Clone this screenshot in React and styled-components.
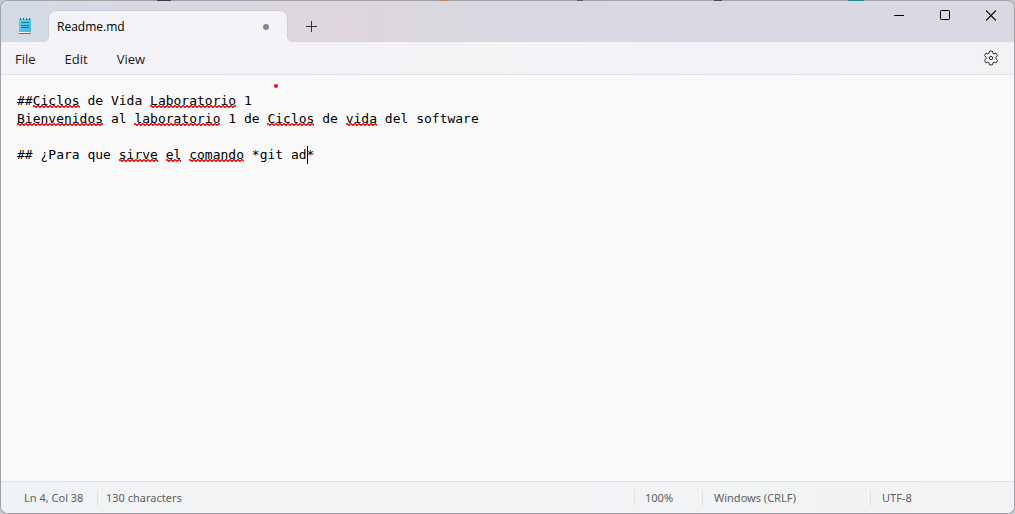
import React from "react";
import styled, { createGlobalStyle } from "styled-components";

const GlobalStyle = createGlobalStyle`
  *, *::before, *::after { box-sizing: border-box; }
  body {
    margin: 0;
    background: #c6c9cb;
    font-family: "Open Sans", "Noto Sans", sans-serif;
    color: #1b1b1b;
  }
  button, textarea { font: inherit; color: inherit; }
`;

const Window = styled.div`
  display: flex;
  flex-direction: column;
  min-height: 100vh;
  border: 1px solid transparent;
  border-radius: 8px;
  overflow: hidden;
  background:
    linear-gradient(#f9f9f9, #f9f9f9) padding-box,
    linear-gradient(
      90deg,
      transparent 157px, #3c383c 157px 171px,
      transparent 171px 439px, #b5836a 439px 447px,
      transparent 447px 577px, #5c5a60 577px 583px,
      transparent 583px 714px, #4c4a50 714px 722px,
      transparent 722px 848px, #2b8798 848px 864px,
      transparent 864px
    ) 0 0 / 100% 1px no-repeat border-box,
    linear-gradient(#a2a2a6, #a2a2a6) border-box;
`;

const TitleBar = styled.header`
  display: flex;
  height: 41px;
  padding-left: 15px;
  background: linear-gradient(90deg, #d3dbe6 0%, #d8d9e4 11%, #ddd6df 28%, #ded6dc 34%, #dbd8dd 41%, #d9d8e2 50%, #d8d9e2 60%, #d9d9e4 100%);
`;

const AppIcon = styled.svg`
  width: 18px;
  height: 18px;
  margin: 16px 14px 0 0;
`;

const Tab = styled.div`
  position: relative;
  display: flex;
  align-items: center;
  justify-content: space-between;
  width: 240px;
  height: 32px;
  margin-top: 9px;
  padding: 0 18px 0 8px;
  border: 1px solid #cfcfda;
  border-bottom: 0;
  border-radius: 8px 8px 0 0;
  background: #f3f3f7;
  font-size: 12px;
  line-height: 16px;

  &::before,
  &::after {
    content: "";
    position: absolute;
    bottom: 0;
    width: 4px;
    height: 4px;
  }
  &::before {
    right: 100%;
    background: radial-gradient(circle at 0 0, transparent 3px, #f3f3f7 4px);
  }
  &::after {
    left: 100%;
    background: radial-gradient(circle at 100% 0, transparent 3px, #f3f3f7 4px);
  }
`;

const TabTitle = styled.button`
  padding: 0;
  border: 0;
  background: none;
  color: #000;
`;

const UnsavedDot = styled.span`
  width: 6px;
  height: 6px;
  border-radius: 50%;
  background: #858585;
`;

const IconButton = styled.button`
  display: grid;
  place-items: center;
  width: ${(p) => p.$width}px;
  height: ${(p) => p.$height}px;
  padding: 0;
  border: 0;
  background: none;
`;

const NewTab = styled(IconButton)`
  margin-top: 9px;
`;

const WindowControls = styled.div`
  display: flex;
  margin-left: auto;
`;

const MenuBar = styled.nav`
  display: flex;
  align-items: center;
  justify-content: space-between;
  height: 33px;
  padding: 0 8px 0 4px;
  border-bottom: 1px solid #e3e3e6;
  background: linear-gradient(90deg, #f3f3f8 0%, #f4f2f6 32%, #f3f4f6 50%, #f2f3f8 68%, #f3f3f6 100%);
`;

const Menus = styled.div`
  display: flex;
  gap: 9px;
`;

const MenuButton = styled.button`
  padding: 2px 10px 0;
  border: 0;
  background: none;
  font-size: 13px;
  line-height: 30px;
`;

const Editor = styled.main`
  position: relative;
  display: flex;
  flex: 1;
  padding: 17px 16px;
  font-family: "DejaVu Sans Mono", "Liberation Mono", monospace;
  font-size: 13px;
  line-height: 18px;
`;

const TextArea = styled.textarea`
  flex: 1;
  padding: 0;
  border: 0;
  outline: 0;
  resize: none;
  background: none;
  color: #000;
`;

const Overlay = styled.div`
  position: absolute;
  inset: 17px 16px;
  pointer-events: none;
`;

const Squiggle = styled.svg`
  position: absolute;
  height: 3px;
`;

const Caret = styled.span`
  position: absolute;
  width: 1px;
  height: 18px;
  background: #000;
`;

const Pointer = styled.span`
  position: absolute;
  top: 9px;
  left: 273px;
  width: 4px;
  height: 4px;
  border-radius: 50%;
  background: #e81123;
`;

const StatusBar = styled.footer`
  display: flex;
  align-items: center;
  height: 32px;
  padding-left: 12px;
  border-top: 1px solid #e3e3e5;
  background: linear-gradient(90deg, #eff3f5 0%, #f2f3f6 12%, #f3f3f3 40%, #f1f3f6 60%, #f3f3f3 80%, #f4f2f5 100%);
  color: #5f5f5f;
  font-family: "Noto Sans", "Open Sans", sans-serif;
  font-size: 11px;
  line-height: 16px;
`;

const StatusCell = styled.span`
  flex: ${(p) => (p.$width ? `0 0 ${p.$width}px` : "1")};
  padding-left: ${(p) => p.$pad}px;
  border-left: 1px solid ${(p) => (p.$first ? "transparent" : "#e1e1e4")};
`;

const text = `##Ciclos de Vida Laboratorio 1
Bienvenidos al laboratorio 1 de Ciclos de vida del software

## ¿Para que sirve el comando *git ad*`;

const misspelled = [
  { line: 0, start: 2, length: 6 },
  { line: 0, start: 17, length: 11 },
  { line: 1, start: 0, length: 11 },
  { line: 1, start: 15, length: 11 },
  { line: 1, start: 32, length: 6 },
  { line: 1, start: 42, length: 4 },
  { line: 3, start: 13, length: 5 },
  { line: 3, start: 19, length: 2 },
  { line: 3, start: 22, length: 7 },
];

const LINE = 18;

export default function App() {
  return (
    <>
      <GlobalStyle />
      <Window>
        <TitleBar>
          <AppIcon viewBox="0 0 18 18" aria-hidden="true">
            <defs>
              <linearGradient id="page" x1="0" y1="0" x2="1" y2="1">
                <stop offset="0" stopColor="#62d4ee" />
                <stop offset="1" stopColor="#45b4da" />
              </linearGradient>
            </defs>
            <path d="M3 15h12v1H3z" fill="#f4f4f4" />
            <path d="M3 16h11l1-1v1l-1 1H3z" fill="#b4521c" />
            <rect x="3" y="2" width="12" height="13" rx="0.6" fill="url(#page)" />
            <path d="M4.5 1v2M7.500 1v2M10.500 1v2M13.500 1v2" stroke="#1c6c8c" />
            <path d="M5 5.500h8M5 8.500h8M5 10.500h8" stroke="#16779c" />
          </AppIcon>
          <Tab>
            <TabTitle>Readme.md</TabTitle>
            <UnsavedDot />
          </Tab>
          <NewTab $width={47} $height={32} aria-label="New tab">
            <svg width="11" height="11" viewBox="0 0 11 11">
              <path d="M5.5 0v11M0 5.5h11" stroke="#333" />
            </svg>
          </NewTab>
          <WindowControls>
            <IconButton $width={46} $height={29} aria-label="Minimize">
              <svg width="10" height="11" viewBox="0 0 10 11">
                <path d="M0 5.5h10" stroke="#000" />
              </svg>
            </IconButton>
            <IconButton $width={46} $height={29} aria-label="Maximize">
              <svg width="10" height="11" viewBox="0 0 10 11">
                <rect x="0.5" y="0.5" width="9" height="9" rx="0.8" fill="none" stroke="#000" />
              </svg>
            </IconButton>
            <IconButton $width={46} $height={29} aria-label="Close">
              <svg width="10" height="11" viewBox="0 0 10 11">
                <path d="M0 .5l10 10M10 .5l-10 10" stroke="#000" strokeWidth="1.1" />
              </svg>
            </IconButton>
          </WindowControls>
        </TitleBar>
        <MenuBar>
          <Menus>
            <MenuButton>File</MenuButton>
            <MenuButton>Edit</MenuButton>
            <MenuButton>View</MenuButton>
          </Menus>
          <IconButton $width={30} $height={30} aria-label="Settings">
            <svg width="16" height="16" viewBox="0 0 16 16" fill="none" stroke="#303030" strokeLinejoin="round">
              <path d="M6.6 1.1h2.8l.5 2 1.2.7 2-.6 1.4 2.5-1.5 1.5v1.6l1.5 1.5-1.4 2.5-2-.6-1.2.7-.5 2H6.600l-.5-2-1.200-.7-2 .6-1.400-2.500L3 8.800V7.200L1.500 5.700l1.400-2.500 2 .6 1.200-.7z" />
              <circle cx="8" cy="8" r="1.7" />
            </svg>
          </IconButton>
        </MenuBar>
        <Editor>
          <TextArea aria-label="Document text" spellCheck={false} defaultValue={text} />
          <Overlay aria-hidden="true">
            <svg width="0" height="0">
              <defs>
                <pattern id="wave" width="4" height="3" patternUnits="userSpaceOnUse">
                  <path d="M-1 2.5l2-2 2 2 2-2" fill="none" stroke="#e81010" strokeWidth="1.4" />
                </pattern>
              </defs>
            </svg>
            {misspelled.map((m) => (
              <Squiggle
                key={`${m.line}-${m.start}`}
                style={{ top: m.line * LINE + 13, left: `${m.start}ch`, width: `${m.length}ch` }}
              >
                <rect width="100%" height="3" fill="url(#wave)" />
              </Squiggle>
            ))}
            <Caret style={{ top: 3 * LINE, left: "37ch" }} />
          </Overlay>
          <Pointer />
        </Editor>
        <StatusBar>
          <StatusCell $width={84} $pad={10} $first>Ln 4, Col 38</StatusCell>
          <StatusCell $pad={8}>130 characters</StatusCell>
          <StatusCell $width={68} $pad={10}>100%</StatusCell>
          <StatusCell $width={168} $pad={11}>Windows (CRLF)</StatusCell>
          <StatusCell $width={144} $pad={11}>UTF-8</StatusCell>
        </StatusBar>
      </Window>
    </>
  );
}
